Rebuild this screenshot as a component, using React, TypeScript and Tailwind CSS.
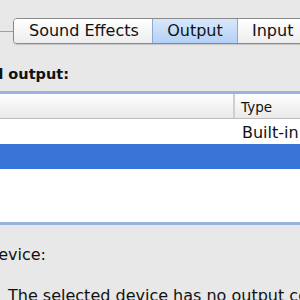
import React from "react";

export default function App() {
  const font = { fontFamily: '"Lucida Grande", "DejaVu Sans", sans-serif' };
  return (
    <div
      className="w-[300px] h-[300px] overflow-hidden bg-[#e8e8e8] text-[#111]"
      style={font}
    >
      {/* Tabs */}
      <div className="flex items-center pt-[18px] whitespace-nowrap">
        <div className="w-[13px] h-px bg-[#a0a0a0] shrink-0" />
        <div className="flex h-[26px] border border-[#8a8a8a] rounded-[4px] overflow-hidden shrink-0 shadow-[0_1px_1px_rgba(0,0,0,0.15)]">
          <div className="w-[138px] flex items-center pl-[15px] text-[16px] leading-[24px] bg-gradient-to-b from-[#ffffff] to-[#ededed]">
            Sound Effects
          </div>
          <div className="w-[86px] flex items-center justify-center text-[16px] leading-[24px] bg-gradient-to-b from-[#d8e8fb] to-[#b3d1f6] border-x border-[#8ea9d0]">
            Output
          </div>
          <div className="w-[110px] flex items-center pl-[14px] text-[16px] leading-[24px] bg-gradient-to-b from-[#ffffff] to-[#ededed]">
            Input
          </div>
        </div>
      </div>

      {/* Label */}
      <div className="mt-[22px] h-[17px] w-[69px] flex justify-end whitespace-nowrap">
        <span className="font-bold text-[14.5px] leading-[17px]">
          Select a device for sound output:
        </span>
      </div>

      {/* Table with focus ring */}
      <div className="mt-[8px] w-[300px] border-y-[3px] border-[#98b4de]">
        <div className="flex h-[25px] border-b border-[#bdbdbd] bg-gradient-to-b from-[#ffffff] to-[#e9e9e9] text-[13.5px] leading-[22px]">
          <div className="w-[235px] border-r-2 border-[#cfcfcf]" />
          <div className="pl-[6px] pt-[2px]">Type</div>
        </div>
        <div className="flex h-[25px] bg-white text-[16px] leading-[25px]">
          <div className="w-[237px]" />
          <div className="pl-[5px] pt-px whitespace-nowrap">Built-in</div>
        </div>
        <div className="h-[25px] bg-[#3875d7]" />
        <div className="h-[53px] bg-white" />
      </div>

      {/* Settings label */}
      <div className="mt-[20px] h-[20px] w-[46px] flex justify-end whitespace-nowrap">
        <span className="text-[16px] leading-[20px]">
          Settings for the selected device:
        </span>
      </div>

      {/* Message */}
      <div className="mt-[21px] pl-[8px] text-[16px] leading-[20px] whitespace-nowrap">
        The selected device has no output controls
      </div>
    </div>
  );
}
